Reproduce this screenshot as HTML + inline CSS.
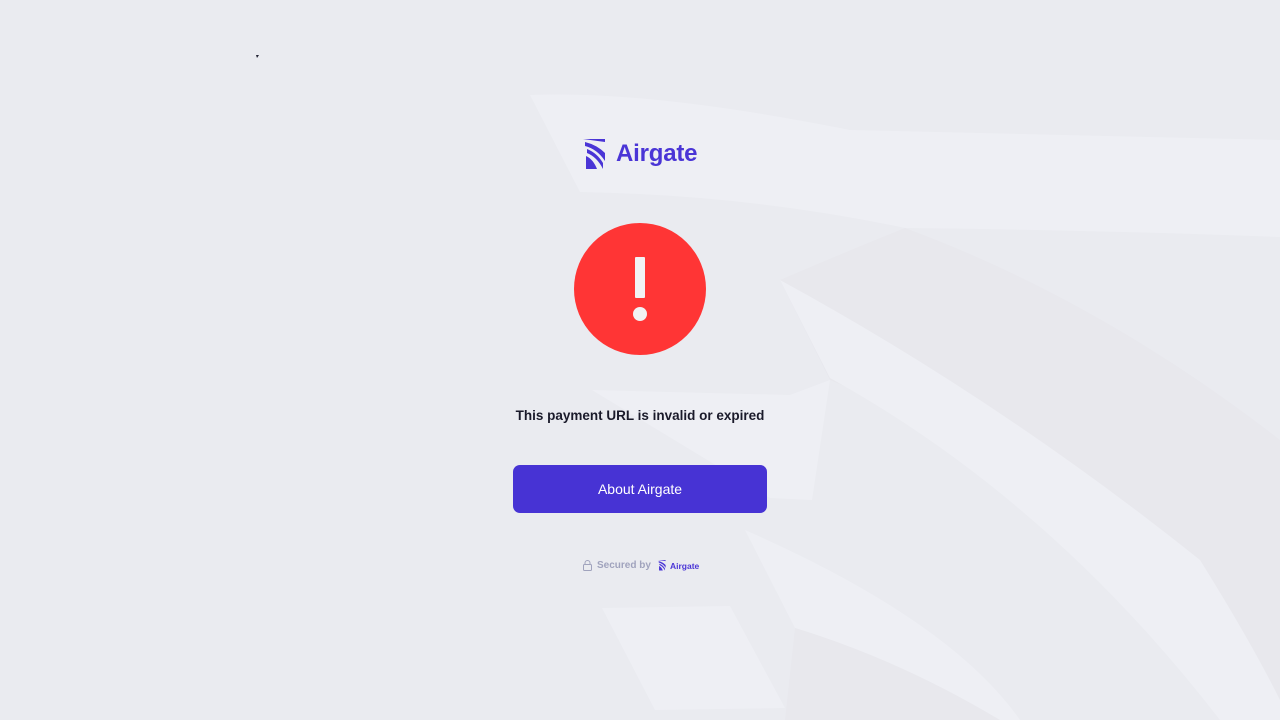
<!DOCTYPE html>
<html><head><meta charset="utf-8"><style>
html,body{margin:0;padding:0;width:1280px;height:720px;overflow:hidden;background:#eaebf0;font-family:"Liberation Sans",sans-serif;}
.abs{position:absolute}
</style></head><body>
<svg class="abs" style="left:0;top:0" width="1280" height="720">
<path d="M530 95 Q650 90 850 130 L1280 140 L1280 237 Q1100 230 905 228 Q750 195 580 192 Z" fill="#eeeff4"/>
<path d="M905 228 Q1100 300 1280 440 L1280 720 L1220 720 Q1050 470 830 380 L780 280 Q850 250 905 228Z" fill="#e8e8ed"/>
<path d="M780 280 Q1000 400 1200 560 Q1250 640 1280 700 L1280 720 L1220 720 Q1050 500 830 378 Z" fill="#eeeff4"/>
<path d="M592 390 L790 395 L830 380 L812 500 L770 498 Z" fill="#eeeff4"/>
<path d="M745 530 Q950 620 1020 720 L990 720 Q900 660 795 628 Z" fill="#eeeff4"/>
<path d="M602 608 L730 606 L785 708 L655 710 Z" fill="#eeeff4"/>
<path d="M795 628 L785 720 L1000 720 Q900 660 795 628Z" fill="#e8e8ed"/>
<path d="M256 55 L259 55 L257 58Z" fill="#223"/>
</svg>
<svg class="abs" style="left:583px;top:139px" width="26" height="31" viewBox="0 0 26 31">
<path d="M0 0 H22 V3 Z" fill="#4a35d6"/>
<path d="M2 3 Q14 6 22 14 L22 22 Q14 10 2 7Z" fill="#4a35d6"/>
<path d="M4 10 Q14 14 20 24 L20 30 Q14 18 4 14Z" fill="#4a35d6"/>
<path d="M3 17 Q10 20 14 30 L3 30Z" fill="#4a35d6"/>
</svg>
<div class="abs" style="left:616px;top:140px;font-size:24px;color:#4a35d6;font-weight:bold;letter-spacing:-0.2px">Airgate</div>
<div class="abs" style="left:574px;top:223px;width:132px;height:132px;border-radius:50%;background:#ff3535"></div>
<div class="abs" style="left:635px;top:257px;width:10px;height:41px;background:#f2f2f4;border-radius:1px"></div>
<div class="abs" style="left:633px;top:307px;width:14px;height:14px;border-radius:50%;background:#f2f2f4"></div>
<div class="abs" style="left:0;width:1280px;top:408px;text-align:center;font-size:13.5px;font-weight:bold;color:#1a1a2a">This payment URL is invalid or expired</div>
<div class="abs" style="left:513px;top:465px;width:254px;height:48px;border-radius:7px;background:#4733d4;color:#fff;font-size:14px;line-height:48px;text-align:center;font-weight:500">About Airgate</div>
<svg class="abs" style="left:583px;top:560px" width="9" height="11" viewBox="0 0 9 11"><rect x="0.5" y="4.5" width="8" height="6" rx="1" fill="none" stroke="#a0a3bd"/><path d="M2 4.5 V3 a2.5 2.5 0 0 1 5 0 V4.5" fill="none" stroke="#a0a3bd"/></svg>
<div class="abs" style="left:597px;top:560px;font-size:10px;color:#a0a3bd;font-weight:bold">Secured by</div>
<svg class="abs" style="left:658px;top:560px" width="9" height="11" viewBox="0 0 26 31"><path d="M0 0 H22 V3 Z M2 3 Q14 6 22 14 L22 22 Q14 10 2 7Z M4 10 Q14 14 20 24 L20 30 Q14 18 4 14Z M3 17 Q10 20 14 30 L3 30Z" fill="#4a35d6"/></svg>
<div class="abs" style="left:670px;top:561px;font-size:8.5px;color:#4a35d6;font-weight:bold">Airgate</div>
</body></html>
